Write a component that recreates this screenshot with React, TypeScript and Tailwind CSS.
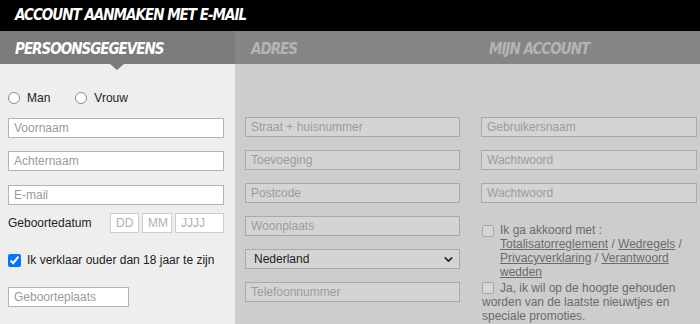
import React from 'react';
import { ChevronDown } from 'lucide-react';

const heading = "font-['DejaVu_Sans_Condensed','DejaVu_Sans',sans-serif] font-bold italic uppercase tracking-[-1px] text-[15px]";

const Field = ({ placeholder, dim, className = '' }: { placeholder: string; dim?: boolean; className?: string }) => (
  <div
    className={
      'h-[20px] flex items-center pl-[5px] border text-[12px] leading-none ' +
      (dim
        ? 'bg-[#d4d4d4] border-[#a9a9a9] text-[#9c9c9c] '
        : 'bg-white border-[#b3b3b3] text-[#9a9a9a] ') +
      className
    }
  >
    {placeholder}
  </div>
);

const Radio = ({ label }: { label: string }) => (
  <label className="flex items-center gap-[7px]">
    <span className="w-[12px] h-[12px] rounded-full border border-[#8a8a8a] bg-white" />
    <span>{label}</span>
  </label>
);

const Box = () => (
  <span className="inline-block align-[-2px] w-[12px] h-[12px] border border-[#a8a8a8] bg-[#d6d6d6] rounded-[2px]" />
);

export default function App() {
  return (
    <div className="w-[700px] h-[324px] overflow-hidden flex flex-col font-['Liberation_Sans',Arial,sans-serif] text-[12px] text-[#222]">
      {/* titel */}
      <div className="h-[31px] shrink-0 bg-black flex items-center pl-[15px]">
        <span className={heading + ' text-white'}>Account aanmaken met e-mail</span>
      </div>

      {/* stappen */}
      <div className="h-[33px] shrink-0 flex bg-[#858585]">
        <div className="relative w-[235px] bg-[#7b7b7b] flex items-center pl-[15px] pt-[3px]">
          <span className={heading + ' text-white'}>Persoonsgegevens</span>
          <span className="absolute left-[110px] -bottom-[6px] w-0 h-0 border-l-[7px] border-r-[7px] border-t-[6px] border-l-transparent border-r-transparent border-t-[#7b7b7b]" />
        </div>
        <div className="w-[235px] flex items-center pl-[16px] pt-[3px]">
          <span className={heading + ' text-[#b4b4b4]'}>Adres</span>
        </div>
        <div className="flex-1 flex items-center pl-[19px] pt-[3px]">
          <span className={heading + ' text-[#b4b4b4]'}>Mijn account</span>
        </div>
      </div>

      <div className="flex-1 flex">
        {/* persoonsgegevens */}
        <div className="w-[235px] bg-[#eeeeee] pl-[8px] pr-[11px] pt-[26px] flex flex-col">
          <div className="h-[16px] flex items-center gap-[25px]">
            <Radio label="Man" />
            <Radio label="Vrouw" />
          </div>
          <Field placeholder="Voornaam" className="mt-[12px]" />
          <Field placeholder="Achternaam" className="mt-[13px]" />
          <Field placeholder="E-mail" className="mt-[14px]" />
          <div className="mt-[8px] flex items-center h-[20px]">
            <span className="w-[102px]">Geboortedatum</span>
            <Field placeholder="DD" className="w-[29px] text-[#b0b0b0] !border-[#cfcfcf]" />
            <Field placeholder="MM" className="w-[30px] ml-[3px] text-[#b0b0b0] !border-[#cfcfcf]" />
            <Field placeholder="JJJJ" className="flex-1 ml-[3px] text-[#b0b0b0] !border-[#cfcfcf]" />
          </div>
          <label className="mt-[21px] h-[12px] flex items-center gap-[6px]">
            <input type="checkbox" defaultChecked className="w-[13px] h-[13px] accent-[#0075ff]" />
            <span>Ik verklaar ouder dan 18 jaar te zijn</span>
          </label>
          <Field placeholder="Geboorteplaats" className="mt-[21px] w-[121px]" />
        </div>

        {/* adres */}
        <div className="w-[235px] bg-[#cdcdcd] pl-[10px] pr-[10px] pt-[53px] flex flex-col gap-[13px]">
          <Field dim placeholder="Straat + huisnummer" />
          <Field dim placeholder="Toevoeging" />
          <Field dim placeholder="Postcode" />
          <Field dim placeholder="Woonplaats" />
          <div className="h-[20px] flex items-center justify-between pl-[8px] pr-[4px] border border-[#a9a9a9] bg-[#d4d4d4] text-[#222]">
            <span>Nederland</span>
            <ChevronDown className="w-[13px] h-[13px]" strokeWidth={3} />
          </div>
          <Field dim placeholder="Telefoonnummer" />
        </div>

        {/* mijn account */}
        <div className="flex-1 bg-[#cdcdcd] pl-[11px] pr-[3px] pt-[53px] flex flex-col text-[#6b6b6b] leading-[14px]">
          <div className="flex flex-col gap-[13px]">
            <Field dim placeholder="Gebruikersnaam" />
            <Field dim placeholder="Wachtwoord" />
            <Field dim placeholder="Wachtwoord" />
          </div>
          <div className="mt-[20px] flex gap-[6px] pl-[1px]">
            <span className="pt-[1px]"><Box /></span>
            <div>
              Ik ga akkoord met :
              <br />
              <span className="underline">Totalisatorreglement</span> / <span className="underline">Wedregels</span> /
              <br />
              <span className="underline">Privacyverklaring</span> / <span className="underline">Verantwoord</span>
              <br />
              <span className="underline">wedden</span>
            </div>
          </div>
          <div className="mt-[2px] pl-[1px] pr-[10px]">
            <Box />
            <span className="ml-[6px]">Ja, ik wil op de hoogte gehouden</span>
            <br />
            worden van de laatste nieuwtjes en
            <br />
            speciale promoties.
          </div>
        </div>
      </div>
    </div>
  );
}
